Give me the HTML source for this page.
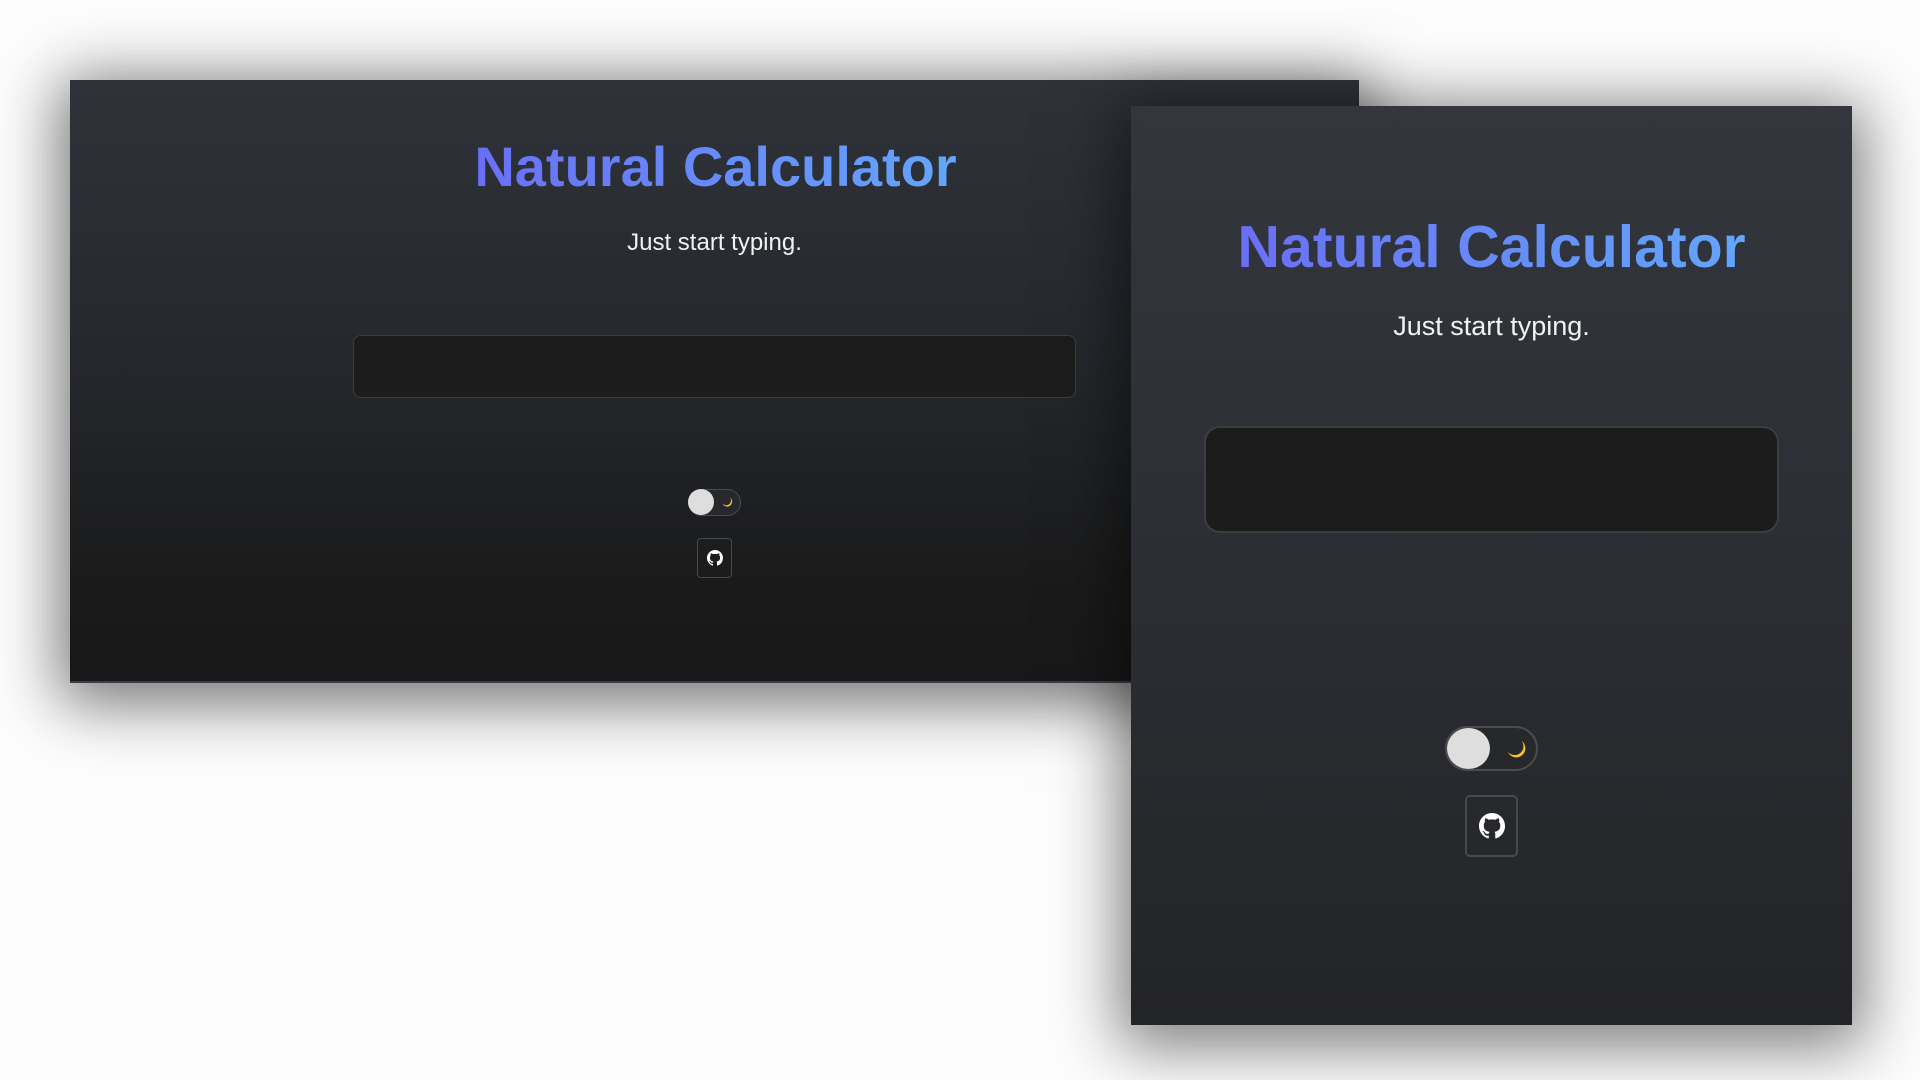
<!DOCTYPE html>
<html><head><meta charset="utf-8"><style>
html,body{margin:0;padding:0;width:1920px;height:1080px;overflow:hidden;background:#fdfdfd;font-family:"Liberation Sans",sans-serif}
.win{position:absolute;overflow:hidden}
#w1{left:70px;top:80px;width:1289px;height:603px;background:linear-gradient(180deg,#2f3339 0%,#25282d 45%,#1a1a1a 85%,#181818 100%);box-shadow:0 10px 60px 10px rgba(0,0,0,.55);border-bottom:2px solid #3a3d4c;box-sizing:border-box}
#w2{left:1131px;top:106px;width:721px;height:919px;background:linear-gradient(180deg,#33373d 0%,#2b2e33 50%,#26282c 80%,#232428 100%);box-shadow:0 10px 60px 12px rgba(0,0,0,.5)}
.t{position:absolute;left:0;right:0;text-align:center;font-weight:bold;white-space:nowrap}
.t span{background:linear-gradient(90deg,#6a6ff5,#63a6fb);-webkit-background-clip:text;background-clip:text;color:transparent}
.s{position:absolute;left:0;right:0;text-align:center;color:#f2f2f2;white-space:nowrap}
.in{position:absolute;background:#1c1c1c;border:1.5px solid #3c3d40;box-sizing:border-box}
.tg{position:absolute;border:1.5px solid #4a4c50;box-sizing:border-box;background:#26282b}
.kn{position:absolute;background:#dedede;border-radius:50%}
.gh{position:absolute;border:1.5px solid #48494c;box-sizing:border-box;display:flex;align-items:center;justify-content:center}
</style></head><body>
<div class="win" id="w1">
  <div class="t" style="top:55px;font-size:56px;line-height:64px;left:2px"><span>Natural Calculator</span></div>
  <div class="s" style="top:148px;font-size:24px;line-height:30px;left:0px">Just start typing.</div>
  <div class="in" style="left:283px;top:255px;width:723px;height:63px;border-radius:8px"></div>
  <div class="tg" style="left:618px;top:409px;width:53px;height:27px;border-radius:14px">
    <div class="kn" style="left:-1px;top:-1px;width:26px;height:26px"></div>
    <svg style="position:absolute;left:32px;top:6px" width="12" height="12" viewBox="0 0 24 24"><path d="M18 3a10 10 0 1 1-15 12a9 9 0 0 0 15-12z" fill="#f5c330"/></svg>
  </div>
  <div class="gh" style="left:627px;top:458px;width:35px;height:40px;border-radius:4px">
    <svg width="16" height="16" viewBox="0 0 16 16"><path fill="#fff" d="M8 0C3.58 0 0 3.58 0 8c0 3.54 2.290 6.53 5.47 7.59.4.07.55-.17.55-.38v-1.33c-2.23.48-2.7-1.07-2.7-1.07-.36-.92-.89-1.17-.89-1.17-.73-.5.06-.49.06-.49.8.06 1.23.83 1.23.83.72 1.23 1.87.87 2.33.67.07-.52.28-.87.51-1.07-1.78-.2-3.65-.89-3.65-3.95 0-.87.31-1.59.83-2.15-.08-.2-.36-1.02.08-2.12 0 0 .67-.21 2.2.82a7.6 7.6 0 0 1 4 0c1.53-1.04 2.2-.82 2.2-.82.44 1.1.16 1.92.08 2.12.51.56.82 1.27.82 2.15 0 3.07-1.87 3.75-3.65 3.95.29.25.54.73.54 1.48v2.2c0 .21.15.46.55.38A8 8 0 0 0 16 8c0-4.42-3.58-8-8-8z"/></svg>
  </div>
</div>
<div class="win" id="w2">
  <div class="t" style="top:106px;font-size:59px;line-height:70px;left:0px"><span>Natural Calculator</span></div>
  <div class="s" style="top:203px;font-size:27px;line-height:34px;left:0px">Just start typing.</div>
  <div class="in" style="left:73px;top:320px;width:575px;height:107px;border-radius:16px;border-width:2px"></div>
  <div class="tg" style="left:314px;top:620px;width:93px;height:45px;border-radius:23px;border-width:2px">
    <div class="kn" style="left:0px;top:0px;width:43px;height:41px"></div>
    <svg style="position:absolute;left:58px;top:10px" width="22" height="22" viewBox="0 0 24 24"><path d="M18 3a10 10 0 1 1-15 12a9 9 0 0 0 15-12z" fill="#f5c330"/></svg>
  </div>
  <div class="gh" style="left:334px;top:689px;width:53px;height:62px;border-radius:5px;border-width:2px">
    <svg width="26" height="26" viewBox="0 0 16 16"><path fill="#fff" d="M8 0C3.58 0 0 3.58 0 8c0 3.54 2.29 6.53 5.47 7.59.4.07.55-.17.55-.38v-1.33c-2.23.48-2.7-1.07-2.7-1.07-.36-.92-.89-1.17-.89-1.17-.73-.5.06-.49.06-.49.8.06 1.23.83 1.23.83.72 1.23 1.87.87 2.33.67.07-.52.28-.87.51-1.07-1.78-.2-3.65-.89-3.65-3.95 0-.87.31-1.59.83-2.15-.08-.2-.36-1.02.08-2.12 0 0 .67-.21 2.2.82a7.6 7.6 0 0 1 4 0c1.53-1.04 2.2-.82 2.2-.82.44 1.1.16 1.92.08 2.12.51.56.82 1.27.82 2.15 0 3.07-1.87 3.75-3.65 3.95.29.25.54.73.54 1.48v2.2c0 .21.15.46.55.38A8 8 0 0 0 16 8c0-4.42-3.58-8-8-8z"/></svg>
  </div>
</div>
</body></html>
